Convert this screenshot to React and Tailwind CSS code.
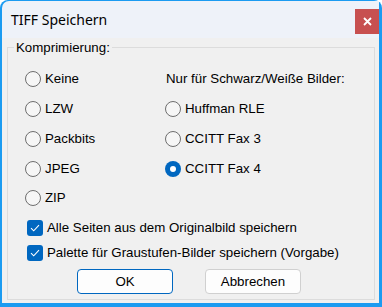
import React, { useState } from 'react';

function Radio({ label, checked, onSelect }) {
  return (
    <label className="flex items-center gap-[4px] h-full cursor-default" onClick={onSelect}>
      {checked ? (
        <span className="w-[16px] h-[16px] rounded-full bg-[#0067c0] flex items-center justify-center shrink-0">
          <span className="w-[6px] h-[6px] rounded-full bg-white" />
        </span>
      ) : (
        <span className="w-[16px] h-[16px] rounded-full border border-[#6e6e6e] bg-[#f6f6f6] shrink-0" />
      )}
      <span>{label}</span>
    </label>
  );
}

function Check({ label, checked, onToggle }) {
  return (
    <label className="flex items-center gap-[4px] h-[25px] pl-[19px] cursor-default" onClick={onToggle}>
      <span
        className={
          checked
            ? 'w-[16px] h-[16px] rounded-[3px] bg-[#0067c0] flex items-center justify-center shrink-0'
            : 'w-[16px] h-[16px] rounded-[3px] border border-[#6e6e6e] bg-[#f6f6f6] shrink-0'
        }
      >
        {checked && (
          <svg width="10" height="8" viewBox="0 0 10 8">
            <path d="M1 4.2 L3.7 6.8 L9 1.2" fill="none" stroke="white" strokeWidth="1.1" />
          </svg>
        )}
      </span>
      <span>{label}</span>
    </label>
  );
}

export default function App() {
  const [mode, setMode] = useState('fax4');
  const [allPages, setAllPages] = useState(true);
  const [palette, setPalette] = useState(true);

  const left = [
    ['none', 'Keine'],
    ['lzw', 'LZW'],
    ['packbits', 'Packbits'],
    ['jpeg', 'JPEG'],
  ];
  const right = [
    ['huffman', 'Huffman RLE'],
    ['fax3', 'CCITT Fax 3'],
    ['fax4', 'CCITT Fax 4'],
  ];

  return (
    <div className="w-[382px] h-[307px] bg-[#1b9bf1] rounded-t-[8px] pt-[1px] pl-[2px] pr-[3px] pb-[4px] flex flex-col">
      {/* Titelleiste */}
      <div className="h-[37px] bg-[#eef2f9] rounded-tl-[7px] flex items-start justify-between shrink-0">
        <div className="pl-[9px] pt-[9px] text-[14px] leading-[20px] text-black font-['Segoe_UI','Noto_Sans',sans-serif]">
          TIFF Speichern
        </div>
        <button className="mt-[8px] w-[24px] h-[25px] bg-[#c75050] text-white flex items-center justify-center">
          <svg width="9" height="9" viewBox="0 0 9 9">
            <path d="M1 1 L8 8 M8 1 L1 8" stroke="white" strokeWidth="1.8" />
          </svg>
        </button>
      </div>

      {/* Inhalt */}
      <div className="flex-1 bg-[#f0f0f0] pl-[5px] pr-[4px] font-['Liberation_Sans',Arial,sans-serif] text-[13.3px] text-black">
        <fieldset className="mt-[2px] border border-[#dcdcdc] pb-[5px]">
          <legend className="ml-[6px] px-[2px] leading-[15px]">Komprimierung:</legend>

          <div className="grid grid-cols-[140px_1fr] pl-[17px] pt-[9px]">
            <div className="flex flex-col">
              {left.map(([key, label]) => (
                <div key={key} className="h-[30px]">
                  <Radio label={label} checked={mode === key} onSelect={() => setMode(key)} />
                </div>
              ))}
              <div className="h-[28px]">
                <Radio label="ZIP" checked={mode === 'zip'} onSelect={() => setMode('zip')} />
              </div>
            </div>
            <div className="flex flex-col">
              <div className="h-[30px] flex items-center pl-[1px]">Nur für Schwarz/Weiße Bilder:</div>
              {right.map(([key, label]) => (
                <div key={key} className="h-[30px]">
                  <Radio label={label} checked={mode === key} onSelect={() => setMode(key)} />
                </div>
              ))}
            </div>
          </div>

          <div className="mt-[3px]">
            <Check label="Alle Seiten aus dem Originalbild speichern" checked={allPages} onToggle={() => setAllPages(!allPages)} />
            <Check label="Palette für Graustufen-Bilder speichern (Vorgabe)" checked={palette} onToggle={() => setPalette(!palette)} />
          </div>

          <div className="flex gap-[32px] pl-[69px] mt-[4px]">
            <button className="w-[96px] h-[25px] rounded-[4px] border border-[#0067c0] bg-[#fdfdfd]">OK</button>
            <button className="w-[96px] h-[25px] rounded-[4px] border border-[#d0d0d0] bg-[#fdfdfd]">Abbrechen</button>
          </div>
        </fieldset>
      </div>
    </div>
  );
}
